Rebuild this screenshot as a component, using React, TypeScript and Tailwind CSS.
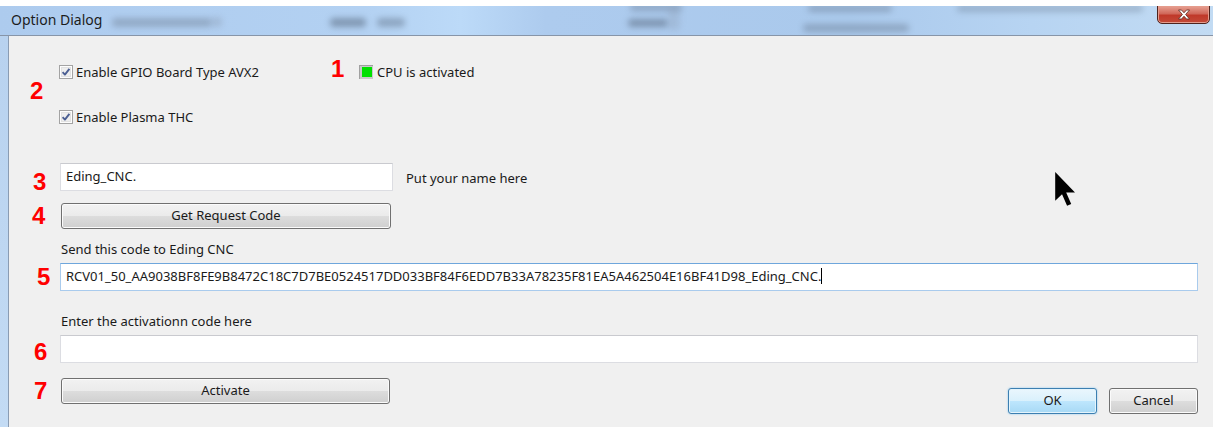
import React from "react";

// Win7-style push button face
const btnFace =
  "flex items-center justify-center rounded-[3px] border border-[#707070] bg-[linear-gradient(#f2f2f2_0%,#ebebeb_50%,#dddddd_50%,#cfcfcf_100%)] shadow-[inset_0_0_0_1px_#fbfbfb] text-[13px] text-[#1a1a1a]";

const defaultBtnFace =
  "flex items-center justify-center rounded-[3px] border border-[#3c7fb1] bg-[linear-gradient(#eaf6fd_0%,#d9f0fc_50%,#bee6fd_50%,#a7d9f5_100%)] shadow-[inset_0_0_0_1px_#e4f4fc,0_0_2px_#7fc3ee] text-[13px] text-[#1a1a1a]";

function Marker({ n, className }: { n: string; className?: string }) {
  return (
    <span
      className={`font-['Liberation_Sans',Arial,sans-serif] font-bold text-[24px] leading-[24px] text-[#ff0000] ${className ?? ""}`}
    >
      {n}
    </span>
  );
}

function CheckBox() {
  return (
    <svg width="14" height="14" viewBox="0 0 14 14" className="shrink-0">
      <rect x="0.5" y="0.5" width="13" height="13" fill="#fdfdfd" stroke="#a3a3a3" />
      <rect x="2" y="2" width="10" height="10" fill="#e2e2e2" />
      <rect x="3" y="3" width="8" height="8" fill="#eeeeee" />
      <path
        d="M3.6 7.2 L5.9 9.6 L10.4 3.8"
        stroke="#4b5f93"
        strokeWidth="1.9"
        fill="none"
        strokeLinejoin="round"
      />
    </svg>
  );
}

function StatusLed() {
  return (
    <svg width="14" height="14" viewBox="0 0 14 14" className="shrink-0">
      <rect x="0" y="0" width="14" height="14" fill="#c9c9c9" />
      <rect x="0" y="0" width="14" height="1" fill="#a0a0a0" />
      <rect x="0" y="0" width="1" height="14" fill="#a0a0a0" />
      <rect x="3" y="2" width="10" height="10" fill="#00e000" />
    </svg>
  );
}

function TitleBar() {
  return (
    <div className="relative h-[29px] overflow-hidden bg-[linear-gradient(90deg,#adcbee_0%,#b3d1f2_30%,#bcdaf8_38%,#adcbee_45%,#aac9ec_70%,#b7d4f2_85%,#c2dbf3_100%)]">
      {/* blurred content seen through the glass frame */}
      <div className="absolute left-[112px] top-[12px] h-[9px] w-[100px] rounded bg-[#6f7f94] opacity-45 blur-[3px]" />
      <div className="absolute left-[212px] top-[11px] h-[10px] w-[10px] rounded bg-[#8a9ab0] opacity-40 blur-[3px]" />
      <div className="absolute left-[330px] top-[12px] h-[9px] w-[36px] rounded bg-[#4f5f74] opacity-50 blur-[3px]" />
      <div className="absolute left-[377px] top-[12px] h-[9px] w-[28px] rounded bg-[#4f5f74] opacity-40 blur-[3px]" />
      <div className="absolute left-[630px] top-[-2px] h-[7px] w-[52px] rounded bg-[#5f6f84] opacity-40 blur-[3px]" />
      <div className="absolute left-[628px] top-[13px] h-[8px] w-[40px] rounded bg-[#4f5f74] opacity-50 blur-[3px]" />
      <div className="absolute left-[668px] top-[2px] h-[22px] w-[12px] rounded bg-[#8a9ab0] opacity-30 blur-[3px]" />
      <div className="absolute left-[808px] top-[-1px] h-[7px] w-[84px] rounded bg-[#5f6f84] opacity-40 blur-[3px]" />
      <div className="absolute left-[803px] top-[18px] h-[8px] w-[106px] rounded bg-[#5f6f84] opacity-40 blur-[3px]" />
      <div className="absolute left-[957px] top-[-1px] h-[7px] w-[186px] rounded bg-[#5f6f84] opacity-35 blur-[3px]" />
      <span className="absolute left-[11px] top-[4px] text-[14px] leading-[20px] text-[#1c1c1c]">Option Dialog</span>
      {/* close button */}
      <div className="absolute left-[1157px] top-[-1px] flex h-[19px] w-[53px] items-center justify-center rounded-b-[5px] border border-[#4e231d] bg-[linear-gradient(#e8a293_0%,#d0685a_45%,#c0392a_55%,#c34a38_100%)] shadow-[inset_0_0_0_1px_#e59c8d]">
        <svg width="14" height="11" viewBox="0 0 14 11">
          <path
            d="M1.5 1 L4.5 1 L7 3.8 L9.5 1 L12.5 1 L8.6 5.5 L12.5 10 L9.5 10 L7 7.2 L4.5 10 L1.5 10 L5.4 5.5 Z"
            fill="#ffffff"
            stroke="#5a2a22"
            strokeWidth="0.8"
            strokeLinejoin="round"
          />
        </svg>
      </div>
    </div>
  );
}

function Cursor() {
  return (
    <svg
      width="22"
      height="36"
      viewBox="0 0 12 20"
      className="absolute left-[1055px] top-[172px]"
    >
      <path d="M0 0 L0 16 L3.8 12.3 L6.6 18.8 L8.9 17.8 L6.1 11.4 L11 11.4 Z" fill="#000000" />
    </svg>
  );
}

export default function App() {
  return (
    <div className="relative h-[427px] w-[1213px] overflow-hidden bg-white font-['Noto_Sans',sans-serif] text-[13px] text-[#1a1a1a]">
      <div className="h-[6px] bg-white" />
      <TitleBar />
      <div className="flex h-[392px] border-t border-[#8795a8]">
        <div className="w-[8px] bg-[linear-gradient(#b8d2ef,#c3dbf4)]" />
        <div className="w-px bg-[#8a9cb3]" />
        <div className="flex-1 bg-[#f0f0f0] pr-[15px]">
          {/* option checkboxes */}
          <div className="flex pt-[26px]">
            <div className="flex w-[50px] items-center pb-[7px] pl-[21px]">
              <Marker n="2" />
            </div>
            <div className="flex flex-col gap-[25px]">
              <div className="flex h-[20px] items-center">
                <div className="flex w-[272px] items-center gap-[3px]">
                  <CheckBox />
                  <span className="leading-[18px]">Enable GPIO Board Type AVX2</span>
                </div>
                <div className="flex w-[28px] pb-[7px]">
                  <Marker n="1" />
                </div>
                <StatusLed />
                <span className="ml-[4px] leading-[18px]">CPU is activated</span>
              </div>
              <div className="flex h-[20px] items-center">
                <div className="flex items-center gap-[3px]">
                  <CheckBox />
                  <span className="leading-[18px]">Enable Plasma THC</span>
                </div>
              </div>
            </div>
          </div>

          {/* user name */}
          <div className="mt-[36px] flex h-[28px] items-center">
            <div className="flex w-[50px] pl-[24px] pt-[9px]">
              <Marker n="3" />
            </div>
            <div className="ml-[1px] h-[28px] w-[333px] border border-[#dcdde2] border-t-[#c9cacf] bg-white pl-[5px] pt-[3px] leading-[18px]">
              Eding_CNC.
            </div>
            <span className="ml-[13px] pt-[2px] leading-[18px]">Put your name here</span>
          </div>

          <div className="mt-[12px] flex h-[26px] items-center">
            <div className="flex w-[50px] pl-[23px]">
              <Marker n="4" />
            </div>
            <button className={`ml-[2px] h-[26px] w-[330px] ${btnFace}`}>Get Request Code</button>
          </div>

          {/* request code */}
          <div className="ml-[52px] mt-[11px] leading-[18px]">Send this code to Eding CNC</div>
          <div className="mt-[5px] flex h-[28px] items-center">
            <div className="flex w-[50px] pl-[28px]">
              <Marker n="5" />
            </div>
            <div className="ml-[1px] flex h-[28px] flex-1 items-start border border-[#a9cbed] border-t-[#6ea6dc] bg-white pl-[5px] pt-[3px] leading-[18px]">
              <span>RCV01_50_AA9038BF8FE9B8472C18C7D7BE0524517DD033BF84F6EDD7B33A78235F81EA5A462504E16BF41D98_Eding_CNC.</span>
              <span className="mt-[1px] h-[16px] w-px bg-black" />
            </div>
          </div>

          {/* activation code */}
          <div className="ml-[52px] mt-[21px] leading-[18px]">Enter the activationn code here</div>
          <div className="mt-[5px] flex h-[28px] items-center">
            <div className="flex w-[50px] pl-[25px] pt-[5px]">
              <Marker n="6" />
            </div>
            <div className="ml-[1px] h-[28px] flex-1 border border-[#dcdde2] border-t-[#c9cacf] bg-white" />
          </div>

          <div className="mt-[15px] flex items-start">
            <div className="flex h-[26px] w-[50px] items-center pl-[25px]">
              <Marker n="7" />
            </div>
            <button className={`ml-[2px] h-[26px] w-[329px] ${btnFace}`}>Activate</button>
            <div className="ml-auto mt-[10px] flex gap-[12px]">
              <button className={`h-[26px] w-[89px] ${defaultBtnFace}`}>OK</button>
              <button className={`h-[26px] w-[89px] ${btnFace}`}>Cancel</button>
            </div>
          </div>
        </div>
      </div>
      <Cursor />
    </div>
  );
}
